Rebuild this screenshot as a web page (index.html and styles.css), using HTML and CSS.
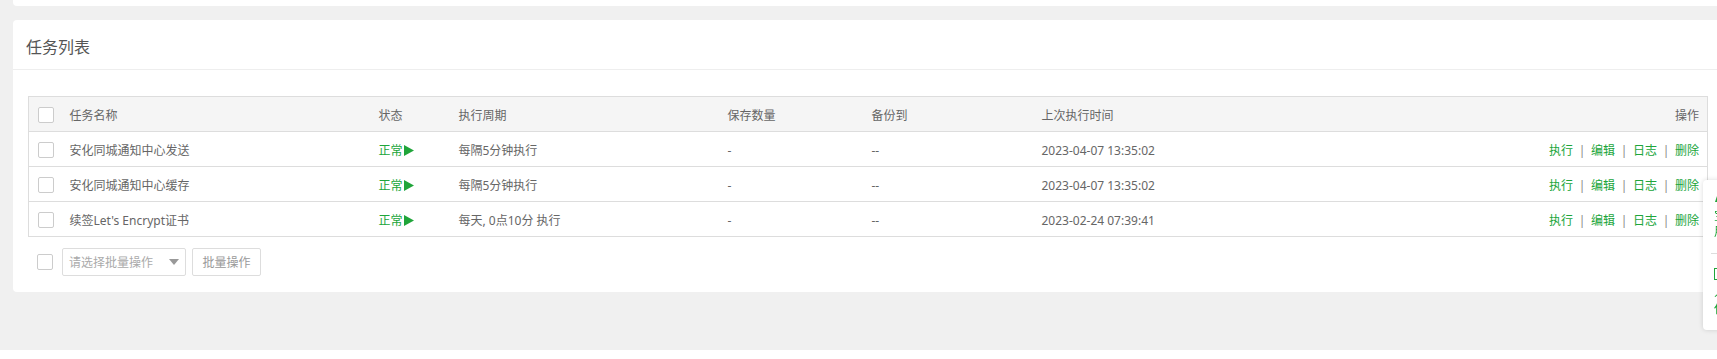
FILE: index.html
```html
<!DOCTYPE html>
<html lang="zh-CN">
<head>
<meta charset="utf-8">
<title>任务列表</title>
<link rel="stylesheet" href="styles.css">
</head>
<body>
<div class="page">
  <div class="top-panel"></div>
  <div class="panel">
    <div class="panel-head">任务列表</div>
    <div class="panel-body">
      <table class="task-table">
        <colgroup>
          <col class="c-check"><col class="c-name"><col class="c-status"><col class="c-cycle"><col class="c-save"><col class="c-backup"><col class="c-time"><col class="c-ops">
        </colgroup>
        <thead>
          <tr>
            <th class="check-cell"><span class="checkbox"></span></th>
            <th>任务名称</th>
            <th>状态</th>
            <th>执行周期</th>
            <th>保存数量</th>
            <th>备份到</th>
            <th>上次执行时间</th>
            <th class="ops">操作</th>
          </tr>
        </thead>
        <tbody>
          <tr>
            <td class="check-cell"><span class="checkbox"></span></td>
            <td>安化同城通知中心发送</td>
            <td class="status">正常<svg class="play" viewBox="0 0 10 11" width="10" height="11"><polygon points="0,0 10,5.5 0,11" fill="#20a53a"/></svg></td>
            <td>每隔5分钟执行</td>
            <td>-</td>
            <td>--</td>
            <td>2023-04-07 13:35:02</td>
            <td class="ops"><a>执行</a><span class="sep">|</span><a>编辑</a><span class="sep">|</span><a>日志</a><span class="sep">|</span><a>删除</a></td>
          </tr>
          <tr>
            <td class="check-cell"><span class="checkbox"></span></td>
            <td>安化同城通知中心缓存</td>
            <td class="status">正常<svg class="play" viewBox="0 0 10 11" width="10" height="11"><polygon points="0,0 10,5.5 0,11" fill="#20a53a"/></svg></td>
            <td>每隔5分钟执行</td>
            <td>-</td>
            <td>--</td>
            <td>2023-04-07 13:35:02</td>
            <td class="ops"><a>执行</a><span class="sep">|</span><a>编辑</a><span class="sep">|</span><a>日志</a><span class="sep">|</span><a>删除</a></td>
          </tr>
          <tr>
            <td class="check-cell"><span class="checkbox"></span></td>
            <td>续签Let's Encrypt证书</td>
            <td class="status">正常<svg class="play" viewBox="0 0 10 11" width="10" height="11"><polygon points="0,0 10,5.5 0,11" fill="#20a53a"/></svg></td>
            <td>每天, 0点10分 执行</td>
            <td>-</td>
            <td>--</td>
            <td>2023-02-24 07:39:41</td>
            <td class="ops"><a>执行</a><span class="sep">|</span><a>编辑</a><span class="sep">|</span><a>日志</a><span class="sep">|</span><a>删除</a></td>
          </tr>
        </tbody>
      </table>
      <div class="batch-bar">
        <span class="checkbox"></span>
        <div class="select">
          <span class="placeholder">请选择批量操作</span>
          <span class="caret"></span>
        </div>
        <button class="btn">批量操作</button>
      </div>
    </div>
  </div>
</div>
<div class="float-widget">
  <div class="fw-item">
    <svg class="fw-icon" viewBox="0 0 12 10" width="12" height="10"><path d="M1 9 L3 3 L6 1 L9 3 L11 9 Z" fill="#20a53a"/></svg>
    <div class="fw-text">宝塔<br>用户</div>
  </div>
  <div class="fw-divider"></div>
  <div class="fw-item">
    <span class="fw-square"></span>
    <div class="fw-text">人工<br>任务</div>
  </div>
</div>
</body>
</html>
```
FILE: styles.css
```css
html, body {
  margin: 0;
  padding: 0;
  background: #ffffff;
  overflow: hidden;
}
body {
  font-family: "Noto Sans", "Noto Sans CJK SC", sans-serif;
  font-size: 12px;
  color: #666;
}
.page {
  background: #f0f0f0;
  height: 350px;
  padding-left: 13px;
  box-sizing: border-box;
  overflow: hidden;
}
.top-panel {
  width: 1709px;
  height: 6px;
  background: #fff;
  border-radius: 0 0 4px 4px;
}
.panel {
  margin-top: 14px;
  width: 1709px;
  height: 272px;
  background: #fff;
  border-radius: 4px;
}
.panel-head {
  box-sizing: border-box;
  height: 50px;
  padding: 5px 0 0 13px;
  line-height: 44px;
  font-size: 16px;
  color: #555;
  border-bottom: 1px solid #eee;
}
.panel-body {
  padding: 26px 15px 0 15px;
}
.task-table {
  width: 1679px;
  table-layout: fixed;
  border-collapse: collapse;
  border: 1px solid #ddd;
}
.c-check { width: 33px; }
.c-name { width: 309px; }
.c-status { width: 80px; }
.c-cycle { width: 269px; }
.c-save { width: 144px; }
.c-backup { width: 170px; }
.c-time { width: 474px; }
.c-ops { width: 200px; }
.task-table th,
.task-table td {
  padding: 2px 8px 0 8px;
  text-align: left;
  font-weight: normal;
  white-space: nowrap;
  color: #666;
}
.task-table thead tr {
  height: 35px;
  background: #f5f5f5;
}
.task-table tbody tr {
  height: 35px;
  border-top: 1px solid #ddd;
}
.task-table th.check-cell,
.task-table td.check-cell {
  padding: 0 0 0 9px;
}
.checkbox {
  display: inline-block;
  width: 14px;
  height: 14px;
  border: 1px solid #ccc;
  border-radius: 2px;
  background: #fff;
  vertical-align: middle;
}
.task-table td.status {
  color: #20a53a;
}
.play {
  vertical-align: -1px;
  margin-left: 1px;
}
.task-table .ops {
  text-align: right;
}
.ops a {
  color: #20a53a;
}
.ops .sep {
  display: inline-block;
  width: 18px;
  text-align: center;
  color: #888;
}
.batch-bar {
  display: flex;
  align-items: center;
  margin-top: 11px;
  padding-left: 9px;
  gap: 9px;
}
.select {
  box-sizing: border-box;
  width: 124px;
  height: 28px;
  border: 1px solid #ddd;
  border-radius: 2px;
  display: flex;
  align-items: center;
  justify-content: space-between;
  padding: 0 6px 0 6px;
}
.placeholder {
  color: #aaa;
  white-space: nowrap;
}
.caret {
  width: 0;
  height: 0;
  border-left: 5px solid transparent;
  border-right: 5px solid transparent;
  border-top: 6px solid #999;
}
.btn {
  box-sizing: border-box;
  height: 28px;
  width: 69px;
  margin-left: -3px;
  border: 1px solid #ddd;
  border-radius: 2px;
  background: #fff;
  color: #999;
  font-family: inherit;
  font-size: 12px;
  padding: 0;
  white-space: nowrap;
}
.float-widget {
  position: fixed;
  left: 1703px;
  top: 180px;
  width: 60px;
  height: 150px;
  box-sizing: border-box;
  background: #fff;
  border-radius: 4px;
  box-shadow: 0 0 5px rgba(0, 0, 0, 0.15);
  padding: 13px 0 0 11px;
}
.fw-item {
  color: #20a53a;
}
.fw-icon {
  display: block;
}
.fw-text {
  margin-top: 5px;
  font-size: 12px;
  line-height: 16px;
  color: #20a53a;
}
.fw-divider {
  height: 1px;
  background: #ddd;
  margin: 13px 0 14px -3px;
}
.fw-square {
  display: block;
  width: 9px;
  height: 10px;
  border: 1px solid #20a53a;
}
```
